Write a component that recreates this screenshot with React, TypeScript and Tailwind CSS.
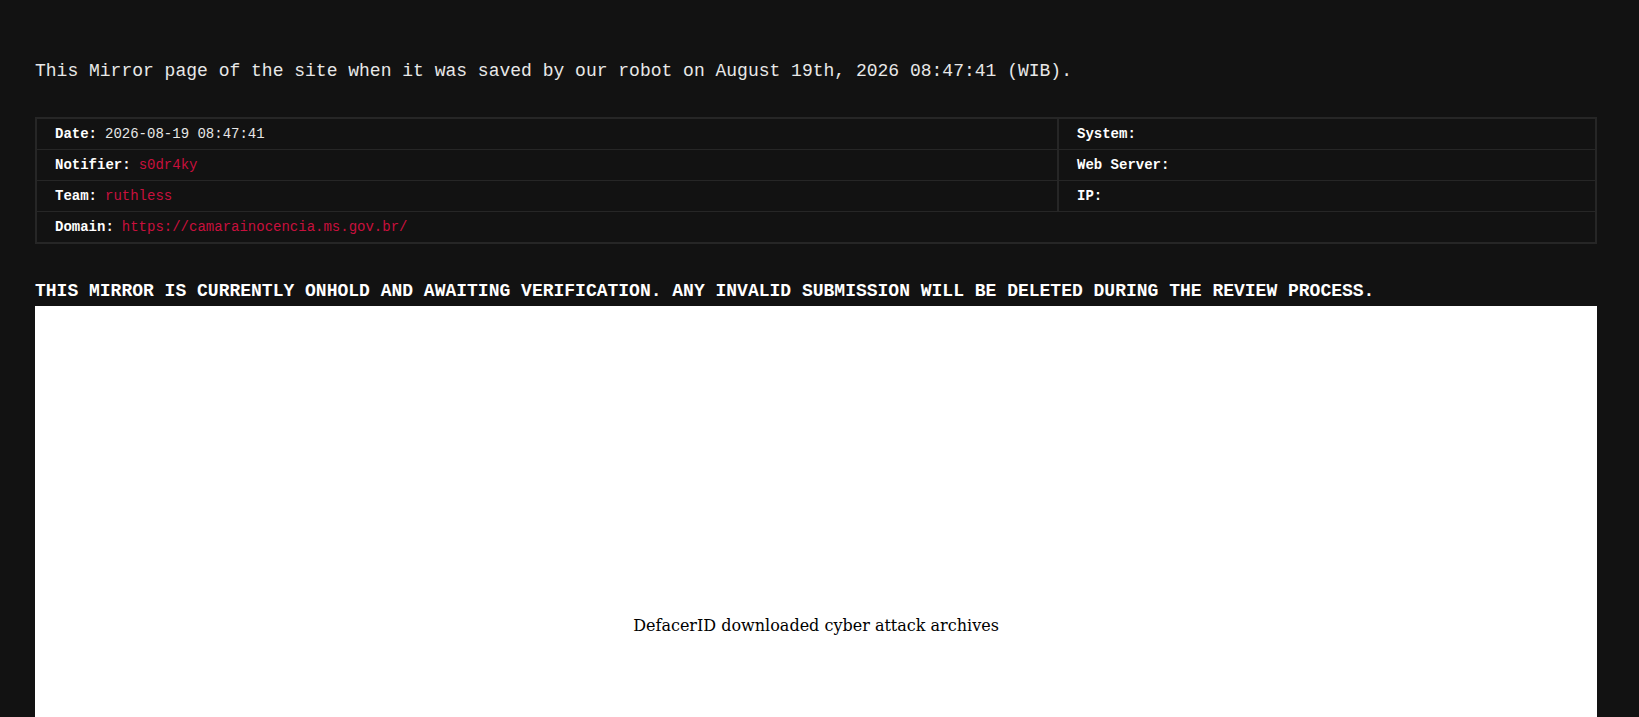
import * as React from "react";

const mono = { fontFamily: '"Liberation Mono", "DejaVu Sans Mono", monospace' };

function Cell({
  label,
  value,
  red = false,
  className = "",
}: {
  label: string;
  value?: string;
  red?: boolean;
  className?: string;
}) {
  return (
    <div className={`flex h-[30px] items-center pl-[18px] text-[14px] ${className}`}>
      <span className="font-bold text-white">{label}</span>
      {value && (
        <span className={`ml-[8px] ${red ? "text-[#c8103d]" : "text-[#e6e6e6]"}`}>{value}</span>
      )}
    </div>
  );
}

export default function App() {
  return (
    <div className="h-screen overflow-hidden bg-[#121212]" style={mono}>
      <div className="ml-[35px] w-[1562px] pt-[59px]">
        <p className="text-[18px] leading-[24px] text-[#e8e8e8]">
          This Mirror page of the site when it was saved by our robot on August 19th, 2026 08:47:41 (WIB).
        </p>

        <div className="mt-[34px] border-2 border-[#262626] bg-[#121212]">
          <div className="grid grid-cols-[1020px_1fr]">
            <Cell label="Date:" value="2026-08-19 08:47:41" />
            <Cell label="System:" className="border-l-2 border-[#262626]" />
          </div>
          <div className="grid grid-cols-[1020px_1fr] border-t border-[#262626]">
            <Cell label="Notifier:" value="s0dr4ky" red />
            <Cell label="Web Server:" className="border-l-2 border-[#262626]" />
          </div>
          <div className="grid grid-cols-[1020px_1fr] border-t border-[#262626]">
            <Cell label="Team:" value="ruthless" red />
            <Cell label="IP:" className="border-l-2 border-[#262626]" />
          </div>
          <div className="border-t border-[#262626]">
            <Cell label="Domain:" value="https://camarainocencia.ms.gov.br/" red />
          </div>
        </div>

        <h2 className="mt-[35px] text-[18px] font-bold leading-[24px] text-white">
          THIS MIRROR IS CURRENTLY ONHOLD AND AWAITING VERIFICATION. ANY INVALID SUBMISSION WILL BE DELETED DURING THE REVIEW PROCESS.
        </h2>

        <div className="mt-[3px] h-[700px] bg-white pt-[309px] text-center">
          <p
            className="text-[16px] leading-[22px] text-black"
            style={{ fontFamily: '"DejaVu Serif", "Liberation Serif", serif' }}
          >
            DefacerID downloaded cyber attack archives
          </p>
        </div>
      </div>
    </div>
  );
}
